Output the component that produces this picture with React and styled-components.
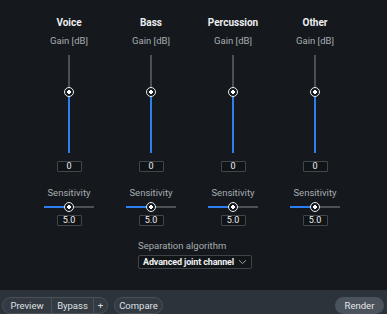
import React from "react";
import styled, { createGlobalStyle } from "styled-components";

const GlobalStyle = createGlobalStyle`
    html, body {
        margin: 0;
        padding: 0;
        background: #15191d;
    }
    body {
        font-family: Roboto, "Noto Sans", sans-serif;
        font-size: 9.5px;
        color: #dfe2e5;
    }
`;

const channels = [
    { name: "Voice", gain: "0", sens: "5.0" },
    { name: "Bass", gain: "0", sens: "5.0" },
    { name: "Percussion", gain: "0", sens: "5.0" },
    { name: "Other", gain: "0", sens: "5.0" },
];

const App = () => {
    return (
        <Page>
            <GlobalStyle />
            <Main>
                <Channels>
                    {channels.map((c) => (
                        <Channel key={c.name}>
                            <Title>{c.name}</Title>
                            <Label>Gain [dB]</Label>
                            <VSlider>
                                <VKnob $pos={37} />
                            </VSlider>
                            <ValueBox $top={8}>{c.gain}</ValueBox>
                            <Label $top={15}>Sensitivity</Label>
                            <HSlider>
                                <HKnob $pos={50} />
                            </HSlider>
                            <ValueBox $top={7}>{c.sens}</ValueBox>
                        </Channel>
                    ))}
                </Channels>
                <Algorithm>
                    <Label $top={0}>Separation algorithm</Label>
                    <Select>
                        <span>Advanced joint channel</span>
                        <svg width="9" height="6" viewBox="0 0 9 6">
                            <path d="M1 1.2 L4.5 4.6 L8 1.2" fill="none" stroke="#9aa0a7" strokeWidth="1" />
                        </svg>
                    </Select>
                </Algorithm>
            </Main>
            <Footer>
                <Group>
                    <GroupButton $w={48}>Preview</GroupButton>
                    <GroupButton $w={41}>Bypass</GroupButton>
                    <GroupButton $w={13}>+</GroupButton>
                </Group>
                <PillButton>Compare</PillButton>
                <RenderButton>Render</RenderButton>
            </Footer>
        </Page>
    );
};

const Page = styled.div`
    height: 314px;
    display: flex;
    flex-direction: column;
`;

const Main = styled.div`
    flex: 1;
    padding-top: 17px;
`;

const Channels = styled.div`
    display: grid;
    grid-template-columns: repeat(4, 82px);
    padding-left: 28px;
`;

const Channel = styled.div`
    display: flex;
    flex-direction: column;
    align-items: center;
`;

const Title = styled.div`
    font-size: 10px;
    font-weight: 700;
    line-height: 12px;
    color: #eceef0;
`;

const Label = styled.div`
    line-height: 12px;
    color: #a7acb1;
    white-space: nowrap;
    margin-top: ${(p) => p.$top ?? 6}px;
`;

const VSlider = styled.div`
    position: relative;
    margin-top: 8px;
    width: 2px;
    height: 98px;
    background: #4b5056;
`;

const VKnob = styled.div`
    position: absolute;
    left: 50%;
    top: ${(p) => p.$pos}px;
    width: 10px;
    height: 10px;
    transform: translate(-50%, -50%);
    &::before {
        content: "";
        position: absolute;
        left: 4px;
        top: 5px;
        width: 2px;
        height: ${(p) => 98 - p.$pos}px;
        background: #2d7ff0;
    }
    &::after {
        content: "";
        position: absolute;
        inset: 0;
        box-sizing: border-box;
        border: 1.5px solid #e9ebed;
        border-radius: 50%;
        background: radial-gradient(circle, #ffffff 0 1.6px, #15191d 2px);
    }
`;

const HSlider = styled.div`
    position: relative;
    margin-top: 7px;
    width: 49px;
    height: 2px;
    background: #4b5056;
`;

const HKnob = styled.div`
    position: absolute;
    top: 50%;
    left: ${(p) => p.$pos}%;
    width: 10px;
    height: 10px;
    transform: translate(-50%, -50%);
    &::before {
        content: "";
        position: absolute;
        top: 4px;
        right: 5px;
        height: 2px;
        width: 25px;
        background: #2d7ff0;
    }
    &::after {
        content: "";
        position: absolute;
        inset: 0;
        box-sizing: border-box;
        border: 1.5px solid #e9ebed;
        border-radius: 50%;
        background: radial-gradient(circle, #ffffff 0 1.6px, #15191d 2px);
    }
`;

const ValueBox = styled.div`
    box-sizing: border-box;
    margin-top: ${(p) => p.$top}px;
    width: 25px;
    height: 11px;
    border: 1px solid #41464c;
    border-radius: 1px;
    background: #111417;
    color: #eceef0;
    font-size: 9px;
    line-height: 9px;
    text-align: center;
`;

const Algorithm = styled.div`
    margin: 14px 0 0 138px;
    width: 114px;
`;

const Select = styled.div`
    box-sizing: border-box;
    margin-top: 3px;
    height: 14px;
    display: flex;
    align-items: center;
    justify-content: space-between;
    padding: 0 4px 0 4px;
    border: 1px solid #3f444a;
    border-radius: 2px;
    background: #121518;
    font-size: 9px;
    font-weight: 700;
    letter-spacing: -0.15px;
    color: #f0f2f4;
    line-height: 12px;
    white-space: nowrap;
    svg {
        flex-shrink: 0;
    }
`;

const Footer = styled.div`
    height: 24px;
    box-sizing: border-box;
    padding: 7px 3px 0 2px;
    display: flex;
    align-items: flex-start;
    gap: 6px;
    background: #2d333a;
`;

const Group = styled.div`
    display: flex;
    height: 17px;
    box-sizing: border-box;
    border: 1px solid #4a5058;
    border-radius: 9px;
    overflow: hidden;
    background: #343a42;
`;

const GroupButton = styled.div`
    width: ${(p) => p.$w}px;
    display: flex;
    align-items: center;
    justify-content: center;
    color: #dde0e3;
    & + & {
        border-left: 1px solid #4a5058;
    }
`;

const PillButton = styled.div`
    height: 17px;
    width: 49px;
    box-sizing: border-box;
    display: flex;
    align-items: center;
    justify-content: center;
    border: 1px solid #4a5058;
    border-radius: 9px;
    background: #343a42;
    color: #dde0e3;
`;

const RenderButton = styled.div`
    margin-left: auto;
    height: 17px;
    width: 49px;
    display: flex;
    align-items: center;
    justify-content: center;
    border-radius: 9px;
    background: #4a525b;
    color: #e4e7ea;
`;

export default App;
